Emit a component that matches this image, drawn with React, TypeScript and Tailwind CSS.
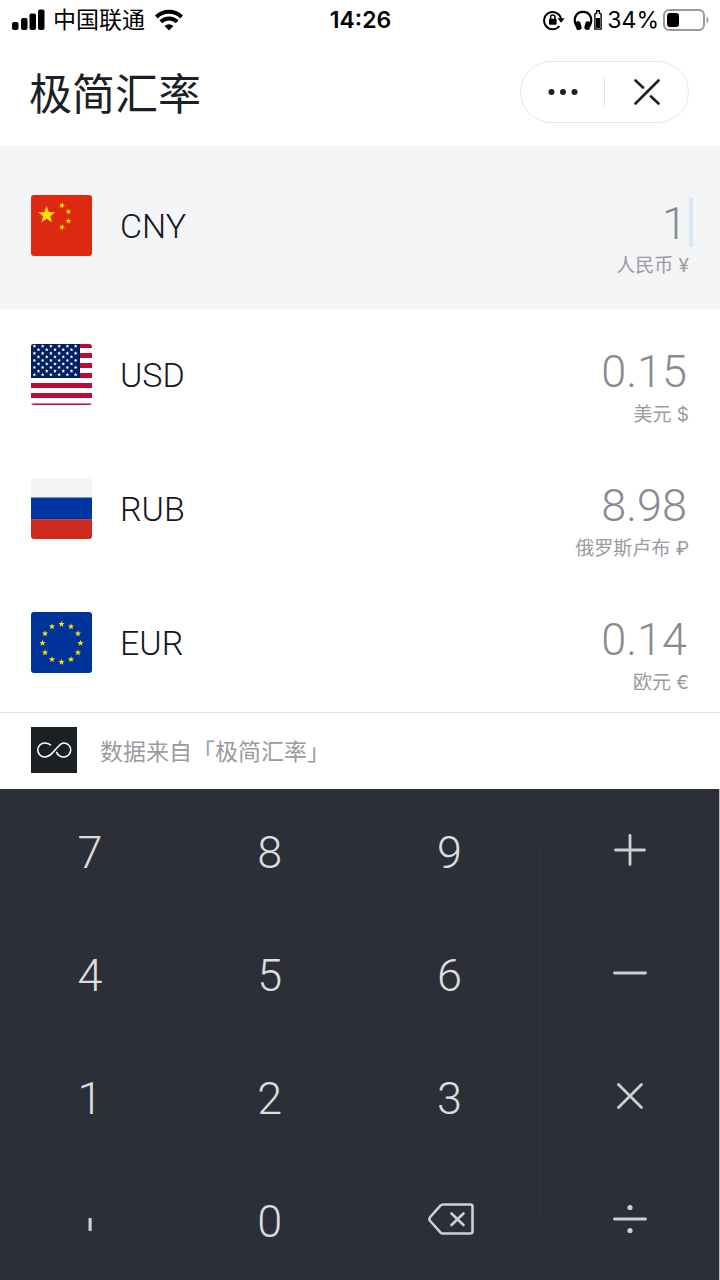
import React from 'react';

interface Currency {
  code: string;
  name: string;
  value: string;
  flag: React.ReactNode;
}

const starPoints = (cx: number, cy: number, r: number, turn = 0) =>
  Array.from({ length: 10 }, (_, i) => {
    const radius = i % 2 === 0 ? r : r * 0.42;
    const angle = ((i * 36 + turn - 90) * Math.PI) / 180;
    return `${(cx + radius * Math.cos(angle)).toFixed(2)},${(cy + radius * Math.sin(angle)).toFixed(2)}`;
  }).join(' ');

const Flag = ({ children }: { children: React.ReactNode }) => (
  <svg viewBox="0 0 61 61" className="size-[61px] shrink-0 rounded-[3px]" aria-hidden="true">
    {children}
  </svg>
);

const ChinaFlag = () => (
  <Flag>
    <rect width="61" height="61" fill="#de2910" />
    <g fill="#ffde00">
      <polygon points={starPoints(15.7, 20, 9)} />
      <polygon points={starPoints(31, 10.5, 3.2, 20)} />
      <polygon points={starPoints(37.4, 16.7, 3.2, -20)} />
      <polygon points={starPoints(37.4, 26, 3.2, 0)} />
      <polygon points={starPoints(31, 32.2, 3.2, 20)} />
    </g>
  </Flag>
);

const UsaFlag = () => (
  <Flag>
    <rect width="61" height="61" fill="#ffffff" />
    {[-1, 9, 19, 29, 39, 49, 59.5].map((y) => (
      <rect key={y} y={y} width="61" height="5" fill="#bd0b35" />
    ))}
    <rect width="49" height="34" fill="#00205f" />
    {Array.from({ length: 9 }, (_, row) =>
      Array.from({ length: row % 2 === 0 ? 6 : 5 }, (_, col) => (
        <polygon
          key={`${row}-${col}`}
          points={starPoints((row % 2 === 0 ? 3.4 : 7.5) + col * 8.25, 2.2 + row * 3.55, 2)}
          fill="#ffffff"
        />
      ))
    )}
  </Flag>
);

const RussiaFlag = () => (
  <Flag>
    <rect width="61" height="61" fill="#f4f5f7" />
    <rect y="19.5" width="61" height="22" fill="#0036a2" />
    <rect y="41.3" width="61" height="20" fill="#cf2a1d" />
  </Flag>
);

const EuropeFlag = () => (
  <Flag>
    <rect width="61" height="61" fill="#003399" />
    {Array.from({ length: 12 }, (_, i) => (
      <polygon
        key={i}
        points={starPoints(
          30.5 + 19 * Math.sin((i * Math.PI) / 6),
          31 - 19 * Math.cos((i * Math.PI) / 6),
          3.3
        )}
        fill="#ffdd00"
      />
    ))}
  </Flag>
);

const currencies: Currency[] = [
  { code: 'CNY', name: '人民币 ¥', value: '1', flag: <ChinaFlag /> },
  { code: 'USD', name: '美元 $', value: '0.15', flag: <UsaFlag /> },
  { code: 'RUB', name: '俄罗斯卢布 ₽', value: '8.98', flag: <RussiaFlag /> },
  { code: 'EUR', name: '欧元 €', value: '0.14', flag: <EuropeFlag /> },
];

const StatusBar = () => (
  <div className="grid h-10 grid-cols-3 items-center pl-3 pr-[11px] font-['Inter','Noto_Sans_CJK_SC',sans-serif] text-[23px] leading-10 text-black">
    <div className="flex items-center gap-2">
      <svg viewBox="0 0 33 22" className="h-[22px] w-[33px]" aria-hidden="true">
        <rect x="0" y="13" width="6.5" height="8" rx="2" />
        <rect x="9" y="9" width="6.5" height="12" rx="2" />
        <rect x="17.5" y="4.5" width="6.5" height="16.5" rx="2" />
        <rect x="26" y="0.5" width="6.5" height="20.5" rx="2" />
      </svg>
      <span className="whitespace-nowrap">中国联通</span>
      <svg viewBox="0 0 30 22" className="ml-px h-[22px] w-[30px]" aria-hidden="true">
        <g fill="none" stroke="#000" strokeWidth="4">
          <path d="M2.4 8a18 18 0 0 1 25.2 0" />
          <path d="M6.8 12.8a11.8 11.8 0 0 1 16.4 0" />
        </g>
        <path d="M15 21.5l-4.4-4.4a6.4 6.4 0 0 1 8.8 0z" />
      </svg>
    </div>
    <div className="text-center font-semibold">14:26</div>
    <div className="flex items-center justify-end gap-1">
      <svg viewBox="0 0 22 22" className="mr-1 size-[22px] shrink-0" aria-hidden="true">
        <path d="M16.4 17A8.6 8.6 0 1 1 18 9.5" fill="none" stroke="#000" strokeWidth="2" />
        <path d="M14.5 9.2h7.2l-3.6 4.6z" />
        <rect x="6" y="9.8" width="7.6" height="6" rx="1" />
        <path d="M7.6 10.2V8.2a2.2 2.2 0 0 1 4.4 0v2" fill="none" stroke="#000" strokeWidth="1.5" />
      </svg>
      <svg viewBox="0 0 30 22" className="h-[22px] w-[30px] shrink-0" aria-hidden="true">
        <path d="M3.3 17C-.2 10.5 2.5 2.8 10 2.8S20.2 10.5 16.7 17" fill="none" stroke="#000" strokeWidth="2.2" />
        <rect x="2.5" y="12.3" width="5.5" height="8.7" rx="2.4" transform="rotate(-14 5 16)" />
        <rect x="12" y="12.3" width="5.5" height="8.7" rx="2.4" transform="rotate(14 15 16)" />
        <path d="M23.7 3.8V1.8h2.6v2l1.8 1.4v14.9h-6.2V5.2z" fill="none" stroke="#000" strokeWidth="1.4" />
        <rect x="23" y="9" width="4" height="10" />
      </svg>
      <span>34%</span>
      <svg viewBox="0 0 46 22" className="h-[22px] w-[46px] shrink-0" aria-hidden="true">
        <rect x="1" y="1" width="40" height="20" rx="5" fill="none" stroke="#999" strokeWidth="2" />
        <rect x="4" y="4" width="12" height="14" rx="3" />
        <path d="M43.5 7.5v7c2.5-1 2.5-6 0-7z" fill="#999" />
      </svg>
    </div>
  </div>
);

const Header = () => (
  <header className="flex h-[106px] items-center justify-between pb-[2px] pl-[29px] pr-[31px]">
    <h1 className="pb-[2px] text-[43px] leading-[60px] text-[#1b1f28]">极简汇率</h1>
    <div className="flex h-[62px] w-[169px] items-center rounded-full border border-[#e4e7e9]">
      <button type="button" aria-label="更多" className="flex h-full flex-1 items-center justify-center">
        <svg viewBox="0 0 30 8" className="h-2 w-[30px]" fill="#1b1f28">
          <circle cx="3.5" cy="4" r="3" />
          <circle cx="15" cy="4" r="3" />
          <circle cx="26.5" cy="4" r="3" />
        </svg>
      </button>
      <span className="h-[30px] w-px bg-[#dfe2e5]" />
      <button type="button" aria-label="关闭" className="flex h-full flex-1 items-center justify-center">
        <svg viewBox="0 0 26 26" className="size-[26px]" fill="none" stroke="#1b1f28" strokeWidth="2.6" strokeLinecap="round">
          <path d="M1.5 24.5l23-23M1.5 1.5l7.5 7M17 17.5l7.5 7" />
        </svg>
      </button>
    </div>
  </header>
);

const valueClass =
  "block h-[58px] w-full pt-[2px] pb-1 pr-[2px] text-right font-['Roboto',sans-serif] text-[45px] leading-[52px] font-light text-[#888b90]";

const CurrencyRow = ({ currency, active }: { currency: Currency; active: boolean }) => (
  <li className={active ? 'bg-[#f4f5f7] pt-[14px] pb-[15px]' : ''}>
    <div className="flex h-[134px] items-start pt-[35px] pr-[31px] pl-[31px]">
      {currency.flag}
      <label
        htmlFor={currency.code}
        className="ml-7 font-['Roboto',sans-serif] text-[34px] leading-[62px] font-light text-[#14171f]"
      >
        {currency.code}
      </label>
      <div className="relative min-w-0 flex-1">
        {active ? (
          <>
            <input id={currency.code} defaultValue={currency.value} inputMode="none" className={`${valueClass} outline-none`} />
            <span className="absolute top-[3px] -right-[4px] h-[49px] w-1 bg-[#d9e6f7]" />
          </>
        ) : (
          <output id={currency.code} className={valueClass}>
            {currency.value}
          </output>
        )}
        <p className="text-right font-['Inter','Noto_Sans_CJK_SC',sans-serif] text-[19px] leading-[26px] text-[#999b9f]">
          {currency.name}
        </p>
      </div>
    </div>
  </li>
);

const SourceBar = () => (
  <div className="flex h-[77px] items-center gap-[23px] border-t border-[#e2e3e4] px-[31px] pb-[2px]">
    <svg viewBox="0 0 46 46" className="size-[46px] bg-[#1b2023]" fill="none" stroke="#fff" strokeWidth="1.6" strokeLinecap="round" aria-hidden="true">
      <path d="M19.5 17.8C17.8 16.6 15.8 16 13.8 16a7 7 0 0 0 0 14c3 0 5-1.3 7-3.5l6-6.5c2-2.3 3.8-4 5.9-4a7 7 0 0 1 0 14c-3.4 0-5.7-1.8-7.2-4.6" />
    </svg>
    <p className="text-[23px] leading-8 text-[#999b9f]">数据来自「极简汇率」</p>
  </div>
);

const OperatorIcon = ({ children }: { children: React.ReactNode }) => (
  <svg
    viewBox="0 0 36 36"
    className="size-9"
    fill="none"
    stroke="#cfd0d2"
    strokeWidth="2.8"
    strokeLinecap="round"
    aria-hidden="true"
  >
    {children}
  </svg>
);

const operators = [
  { label: '加', icon: <path d="M3.5 18h29M18 3.5v29" /> },
  { label: '减', icon: <path d="M2.5 18h31" /> },
  { label: '乘', icon: <path d="M6.5 6.5l23 23M29.5 6.5l-23 23" /> },
  {
    label: '除',
    icon: (
      <>
        <path d="M2.5 18h31" />
        <circle cx="18" cy="6.5" r="2.6" fill="#cfd0d2" stroke="none" />
        <circle cx="18" cy="29.5" r="2.6" fill="#cfd0d2" stroke="none" />
      </>
    ),
  },
];

const digits = ['7', '8', '9', '4', '5', '6', '1', '2', '3'];

const keyClass = 'flex items-center justify-center';
const digitClass = `${keyClass} pt-[6px] font-['Roboto',sans-serif] text-[45px] leading-[52px] font-light text-[#dcddde]`;

const Keypad = () => (
  <div className="flex flex-1 border-r border-[#b9babd] bg-[#2c2f38]">
    <div className="grid w-3/4 shrink-0 grid-cols-3 grid-rows-4">
      {digits.map((digit) => (
        <button key={digit} type="button" className={digitClass}>
          {digit}
        </button>
      ))}
      <button type="button" aria-label="小数点" className={keyClass}>
        <svg viewBox="0 0 12 24" className="h-6 w-3" fill="#cfd0d2">
          <rect x="4.5" y="11" width="3.2" height="13" rx="0.8" />
        </svg>
      </button>
      <button type="button" className={digitClass}>
        0
      </button>
      <button type="button" aria-label="删除" className={`${keyClass} pl-1`}>
        <svg viewBox="0 0 46 32" className="h-8 w-[46px]" fill="none" stroke="#cfd0d2" strokeWidth="2.6" strokeLinecap="round" strokeLinejoin="round">
          <path d="M15 1.5h27.5a2 2 0 0 1 2 2v25a2 2 0 0 1-2 2H15q-1.5 0-2.6-1.2L2.2 18q-1.6-2 0-4L12.4 2.7Q13.5 1.5 15 1.5z" />
          <path d="M23.5 10.5l12 11.5M35.5 10.5l-12 11.5" />
        </svg>
      </button>
    </div>
    <div className="my-[61px] w-px bg-[#373a43]" />
    <div className="grid flex-1 grid-rows-4">
      {operators.map((op) => (
        <button key={op.label} type="button" aria-label={op.label} className={keyClass}>
          <OperatorIcon>{op.icon}</OperatorIcon>
        </button>
      ))}
    </div>
  </div>
);

export default function App() {
  return (
    <div className="flex min-h-screen flex-col bg-white font-['Noto_Sans_CJK_SC',sans-serif]">
      <StatusBar />
      <Header />
      <main className="flex flex-1 flex-col">
        <ul className="pb-px">
          {currencies.map((currency) => (
            <CurrencyRow key={currency.code} currency={currency} active={currency.code === 'CNY'} />
          ))}
        </ul>
        <SourceBar />
        <Keypad />
      </main>
    </div>
  );
}
